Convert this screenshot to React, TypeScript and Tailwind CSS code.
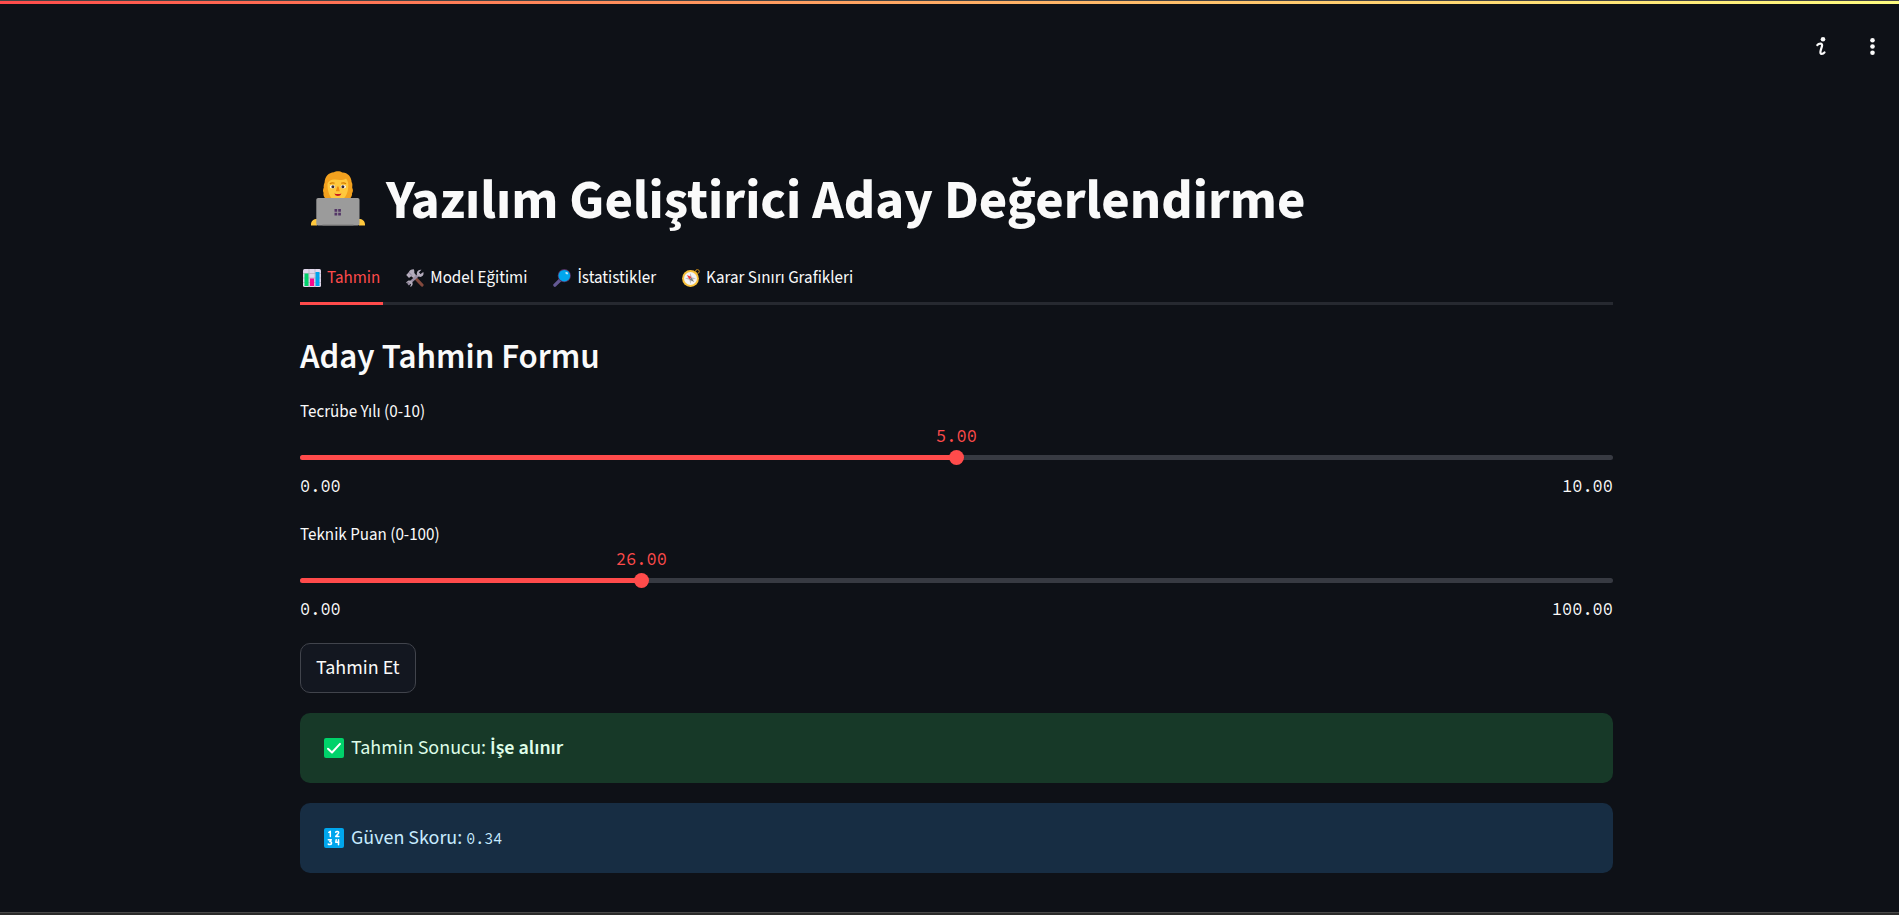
import React, { useId, useState } from "react";

function DeveloperIcon() {
  return (
    <svg viewBox="0 0 54 55" className="mb-[6px] h-[55px] w-[54px] shrink-0" aria-hidden="true">
      <path d="M23 1.2C25-.2 29.5 0 31.2 1.4 36 1 40.6 5.500 40.600 11c1.400 2.500.4 4 .7 6 1 2 .8 3.800-.3 5.200.4 2-.6 4-2.200 5.800H15c-2-1.400-3-4-2.400-6-1-2-.6-4 .2-5.500-.4-2 .2-3.600.8-5C13.800 5.500 17.500 1.500 23 1.200z" fill="#f3a11e" />
      <path d="M16.500 12.500C18 9.500 21 8.200 24 8.600c4 .7 8.500.8 11-1 1.400 1.500 2.300 3.700 2.300 6.400 0 6.500-1.800 11-5 14H21.500c-3.400-3-5.200-9-5-15.500z" fill="#ffc83d" />
      <path d="M18.800 12.800q2.300-1.600 4.800-.5M30.200 12.300q2.500-1.100 4.800.5" stroke="#d67d00" strokeWidth="1.200" fill="none" />
      <ellipse cx="21.500" cy="15.800" rx="2.700" ry="1.700" fill="#fff" />
      <ellipse cx="32.300" cy="15.800" rx="2.700" ry="1.700" fill="#fff" />
      <circle cx="21.900" cy="15.800" r="1.500" fill="#3a2a2c" />
      <circle cx="31.900" cy="15.800" r="1.500" fill="#3a2a2c" />
      <path d="M26.300 15.500l-1.500 4.700h4l-1.300-4.700z" fill="#f08c14" />
      <path d="M23.300 22.600q3.600 1 7.200 0-1 2.500-3.600 2.500t-3.600-2.500z" fill="#c8191e" />
      <path d="M0 54.500C-.3 50.500 2 48 6 48v6.500zM54 54.500c.3-4-2-6.500-6-6.500v6.500z" fill="#ffc83d" />
      <rect x="5.300" y="27" width="43.200" height="27.600" rx="1.800" fill="#9b9b9b" />
      <path d="M11.500 53.600h31v1h-31z" fill="#777" />
      <path d="M23.500 38h2.700v2.700h-2.700zM27.200 38h2.700v2.700h-2.700zM23.500 41.700h2.700v2.700h-2.700zM27.200 41.700h2.700v2.700h-2.700z" fill="#533566" />
    </svg>
  );
}

function ChartIcon() {
  return (
    <svg viewBox="0 0 18 18" className="size-[18px] shrink-0" aria-hidden="true">
      <rect width="18" height="18" rx="1.500" fill="#e1d8ec" />
      <path d="M0 4.500h18M0 9h18M0 13.500h18M6 0v18M12 0v18" stroke="#b4acbc" strokeWidth=".7" />
      <path d="M1.500 4.500h4V17h-4z" fill="#00d26a" />
      <path d="M7 9.500h4V17H7z" fill="#f70a8d" />
      <path d="M12.500 3h4v14h-4z" fill="#00a6ed" />
    </svg>
  );
}

function ToolsIcon() {
  return (
    <svg viewBox="0 0 18 18" className="size-[18px] shrink-0" aria-hidden="true">
      <path d="M7 6.500L16 16" stroke="#83493d" strokeWidth="3.200" strokeLinecap="round" />
      <path d="M2 15.500L14 4.500" stroke="#998ea4" strokeWidth="2.400" />
      <path d="M15.500.8l-2.700 2.600 1.500 1.800L17.300 3c.8 2.300-.4 4.700-3 4.900-2.300 0-4-2.200-3.400-4.200C11.300 1.500 13.500.3 15.500.8z" fill="#b4acbc" />
      <path d="M.2 14.200l2.600-1 2.300 2-1 2.600C5.900 17.600 7 16 6.600 14 6 12 3.500 11 1.800 12 .8 12.600.2 13.400.2 14.200z" fill="#b4acbc" />
      <path d="M7.800.2C5 .2 3.500 1.500 2.800 3.200L.2 6l2.800 3 2.200-1.700 2.200 1.600 2.800-2.600L8.300 4V1.800z" fill="#b4acbc" />
      <path d="M2.800 3.200l3 3.300" stroke="#81738e" strokeWidth=".8" />
    </svg>
  );
}

function MagnifierIcon() {
  return (
    <svg viewBox="0 0 18 18" className="size-[18px] shrink-0" aria-hidden="true">
      <path d="M1.900 16.100l5.500-5.300" stroke="#635994" strokeWidth="3.400" strokeLinecap="round" />
      <circle cx="11.300" cy="6.700" r="6.600" fill="#533566" />
      <circle cx="11.300" cy="6.700" r="5.800" fill="#00a6ed" />
      <ellipse cx="13.700" cy="4.200" rx="1.500" ry="1.100" fill="#b5e7fb" transform="rotate(35 13.700 4.200)" />
    </svg>
  );
}

function CompassIcon() {
  return (
    <svg viewBox="0 0 18 18" className="size-[18px] shrink-0" aria-hidden="true">
      <circle cx="15.400" cy="2.500" r="1.900" fill="none" stroke="#ca8b18" strokeWidth="1" />
      <circle cx="8.500" cy="9.500" r="8.400" fill="#f9c23c" />
      <circle cx="8.500" cy="9.500" r="6.500" fill="#f4f4f4" />
      <path d="M8.500 4l1.200 4.300 4.300 1.200-4.300 1.200-1.200 4.300-1.200-4.300L3 9.500l4.300-1.200z" fill="#bebebe" />
      <path d="M4.800 6l4.700 2-2 2.200z" fill="#f8312f" />
      <path d="M12.200 13l-4.700-2.200 2-2z" fill="#7a7a7a" />
    </svg>
  );
}

function CheckIcon() {
  return (
    <svg viewBox="0 0 20 20" className="size-5 shrink-0" aria-hidden="true">
      <rect width="20" height="20" rx="2" fill="#00d26a" />
      <path d="M4 10.700l4 3.800 8-8.600" fill="none" stroke="#fff" strokeWidth="2" strokeLinecap="round" strokeLinejoin="round" />
    </svg>
  );
}

function NumbersIcon() {
  return (
    <svg viewBox="0 0 20 20" className="size-5 shrink-0" aria-hidden="true">
      <rect width="20" height="20" rx="2" fill="#00a6ed" />
      <g fill="none" stroke="#fff" strokeWidth="1.500" strokeLinecap="round" strokeLinejoin="round">
        <path d="M4.800 4.300l1.500-.9v5.100" />
        <path d="M11.700 4.300c.4-1.300 3-1.200 3 .3 0 1.400-2 2.300-3 3.800h3.200" />
        <path d="M4.300 11.700h3L5.800 13.600c2.500 0 2.200 3-.1 3-.7 0-1.200-.2-1.500-.6" />
        <path d="M12.200 11.700l-.4 2.600h3M14.500 11.700v5" />
      </g>
    </svg>
  );
}

function InfoIcon() {
  return (
    <svg viewBox="0 0 24 24" className="size-6" aria-hidden="true">
      <circle cx="14" cy="5.300" r="2.300" fill="#fafafa" />
      <path d="M8.300 11.100C9.200 9.800 10.500 9.700 11.400 9.700c1.400 0 2 1 1.600 2.400l-1.300 4.300c-.7 2.400-.2 3.500 1.100 3.500 1.200 0 2-.5 2.700-1.500" fill="none" stroke="#fafafa" strokeWidth="2.200" strokeLinecap="round" />
    </svg>
  );
}

function DotsIcon() {
  return (
    <svg viewBox="0 0 24 24" className="size-6" fill="#fafafa" aria-hidden="true">
      <circle cx="12.500" cy="6.300" r="2.300" />
      <circle cx="12.500" cy="12.500" r="2.300" />
      <circle cx="12.500" cy="18.700" r="2.300" />
    </svg>
  );
}

const tabs = [
  { label: "Tahmin", icon: <ChartIcon /> },
  { label: "Model Eğitimi", icon: <ToolsIcon /> },
  { label: "İstatistikler", icon: <MagnifierIcon /> },
  { label: "Karar Sınırı Grafikleri", icon: <CompassIcon /> },
];

type SliderProps = { label: string; max: number; initial: number };

function Slider({ label, max, initial }: SliderProps) {
  const id = useId();
  const [value, setValue] = useState(initial);
  const percent = (value / max) * 100;
  return (
    <div className="flex flex-col">
      <label htmlFor={id} className="text-[17px] leading-[27px]">
        {label}
      </label>
      <div className="relative h-5 font-['Source_Code_Pro','DejaVu_Sans_Mono',monospace] text-[17px] leading-5 text-[#ff4b4b]">
        <output htmlFor={id} className="absolute top-0 -translate-x-1/2" style={{ left: `${percent}%` }}>
          {value.toFixed(2)}
        </output>
      </div>
      <div className="mt-1 grid items-center">
        <div className="[grid-area:1/1] h-[5px] overflow-hidden rounded-full bg-[#373a42]">
          <div className="h-full bg-[#ff4b4b]" style={{ width: `${percent}%` }} />
        </div>
        <input
          id={id}
          type="range"
          min={0}
          max={max}
          step={0.01}
          value={value}
          onChange={(e) => setValue(Number(e.target.value))}
          className="[grid-area:1/1] -mx-[7px] h-[15px] w-[calc(100%+14px)] cursor-pointer appearance-none bg-transparent outline-none [&::-webkit-slider-thumb]:size-[15px] [&::-webkit-slider-thumb]:appearance-none [&::-webkit-slider-thumb]:rounded-full [&::-webkit-slider-thumb]:bg-[#ff4b4b]"
        />
      </div>
      <div className="mt-[7px] flex justify-between font-['Source_Code_Pro','DejaVu_Sans_Mono',monospace] text-[17px] leading-7">
        <span>0.00</span>
        <span>{max.toFixed(2)}</span>
      </div>
    </div>
  );
}

export default function App() {
  const [active, setActive] = useState(0);
  return (
    <div className="flex min-h-screen flex-col bg-[#0e1117] font-['Source_Sans_Pro','Source_Sans_3','Noto_Sans_CJK_SC',sans-serif] text-xl text-[#fafafa]">
      <div className="h-1 border-t border-[#444] bg-linear-to-r from-[#ff4b4b] to-[#fffd80]" />
      <header className="flex justify-end gap-[27px] px-[15px] pt-[30px]">
        <button type="button" aria-label="Info">
          <InfoIcon />
        </button>
        <button type="button" aria-label="Menu">
          <DotsIcon />
        </button>
      </header>
      <main className="flex flex-col pt-[110px] pr-[286px] pb-9 pl-[300px]">
        <h1 className="flex items-center gap-[21px] pl-[11px] text-[55px] leading-[66px] font-bold">
          <DeveloperIcon />
          Yazılım Geliştirici Aday Değerlendirme
        </h1>
        <div role="tablist" className="mt-[21px] flex h-[50px] gap-5 text-[17px] leading-7 shadow-[inset_0_-3px_0_#262930]">
          {tabs.map((tab, i) => (
            <button
              key={tab.label}
              type="button"
              role="tab"
              aria-selected={i === active}
              onClick={() => setActive(i)}
              className={
                i === active
                  ? "flex items-center gap-[6px] border-b-3 border-[#ff4b4b] px-[3px] pb-px text-[#ff4b4b]"
                  : "flex items-center gap-[6px] border-b-3 border-transparent px-[3px] pb-px"
              }
            >
              {tab.icon}
              {tab.label}
            </button>
          ))}
        </div>
        <section className="mt-[30px] flex flex-col gap-5">
          <h2 className="text-[35px] leading-[44px] font-semibold">Aday Tahmin Formu</h2>
          <div className="flex flex-col gap-[22px]">
            <Slider label="Tecrübe Yılı (0-10)" max={10} initial={5} />
            <Slider label="Teknik Puan (0-100)" max={100} initial={26} />
          </div>
          <button
            type="button"
            className="h-[50px] self-start rounded-[10px] border border-[#41444c] bg-[#131720] px-[15px]"
          >
            Tahmin Et
          </button>
          <div role="status" className="flex items-center gap-[7px] rounded-[10px] bg-[#173928] px-6 py-5 leading-[30px] text-[#dffde9]">
            <CheckIcon />
            <p>
              Tahmin Sonucu: <strong className="font-semibold">İşe alınır</strong>
            </p>
          </div>
          <div role="status" className="flex items-center gap-[7px] rounded-[10px] bg-[#172d43] px-6 py-5 leading-[30px] text-[#c7ebff]">
            <NumbersIcon />
            <p>
              Güven Skoru: <code className="font-['Source_Code_Pro','DejaVu_Sans_Mono',monospace] text-[15px] leading-5">0.34</code>
            </p>
          </div>
        </section>
      </main>
      <div className="mt-auto h-[3px] border-t border-[#484848] bg-[#2b2b2b]" />
    </div>
  );
}
